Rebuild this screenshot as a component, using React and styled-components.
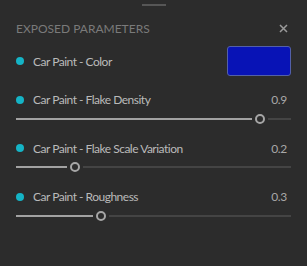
import React from "react";
import styled, { createGlobalStyle } from "styled-components";

const Global = createGlobalStyle`
  html, body { margin: 0; padding: 0; background: #2c2c2c; }
  body { font-family: Lato, "Open Sans", sans-serif; }
`;

const Panel = styled.div`
  width: 307px;
  height: 266px;
  box-sizing: border-box;
  background: #2c2c2c;
  padding: 0 16px;
  display: flex;
  flex-direction: column;
`;

const Grip = styled.div`
  align-self: center;
  width: 24px;
  height: 2px;
  margin-top: 4px;
  background: #565656;
`;

const Header = styled.div`
  margin-top: 11px;
  height: 23px;
  display: flex;
  align-items: center;
  justify-content: space-between;
`;

const Title = styled.div`
  font-size: 12px;
  letter-spacing: 0;
  color: #7a7a7a;
  text-transform: uppercase;
`;

const Close = styled.button`
  width: 16px;
  height: 16px;
  padding: 0;
  border: 0;
  background: transparent;
  display: flex;
  align-items: center;
  justify-content: center;
  color: #9a9a9a;
`;

const List = styled.div`
  margin-top: 6px;
  display: flex;
  flex-direction: column;
  gap: 15.5px;
`;

const ColorRow = styled.div`
  height: 30px;
  display: flex;
  align-items: center;
`;

const Label = styled.div`
  flex: 1;
  display: flex;
  align-items: center;
  gap: 9px;
  height: 16px;
  font-size: 12px;
  letter-spacing: -0.5px;
  color: #bababa;
`;

const Dot = styled.span`
  width: 8px;
  height: 8px;
  border-radius: 50%;
  background: #15b4c6;
  flex: none;
`;

const Swatch = styled.div`
  width: 62px;
  height: 28px;
  border: 1px solid #5360a8;
  border-radius: 3px;
  background: ${(p) => p.color};
`;

const SliderRow = styled.div`
  display: flex;
  flex-direction: column;
  gap: 5px;
`;

const LabelLine = styled.div`
  display: flex;
  align-items: center;
  justify-content: space-between;
  height: 16px;
`;

const Value = styled.span`
  font-size: 12px;
  letter-spacing: -0.3px;
  color: #a8a8a8;
  margin-right: 4px;
`;

const Track = styled.div`
  height: 12px;
  display: flex;
  align-items: center;
`;

const Fill = styled.div`
  height: 2px;
  background: #a2a2a2;
  flex: none;
`;

const Rest = styled.div`
  height: 2px;
  flex: 1;
  background: #444444;
`;

const Thumb = styled.div`
  width: 10px;
  height: 10px;
  box-sizing: border-box;
  border-radius: 50%;
  border: 2px solid #a6a6a6;
  background: #2c2c2c;
  margin: 0 3px;
  flex: none;
`;

function Slider({ value }) {
  const center = 5.5 + value * 265;
  return (
    <Track>
      <Fill style={{ width: `${Math.max(0, center - 8)}px` }} />
      <Thumb />
      <Rest />
    </Track>
  );
}

const params = [
  { name: "Car Paint - Flake Density", value: 0.9 },
  { name: "Car Paint - Flake Scale Variation", value: 0.2 },
  { name: "Car Paint - Roughness", value: 0.3 },
];

export default function App() {
  return (
    <>
      <Global />
      <Panel>
        <Grip />
        <Header>
          <Title>Exposed Parameters</Title>
          <Close aria-label="close">
            <svg width="9" height="9" viewBox="0 0 9 9">
              <path d="M1 1 L8 8 M8 1 L1 8" stroke="currentColor" strokeWidth="1.5" />
            </svg>
          </Close>
        </Header>
        <List>
          <ColorRow>
            <Label>
              <Dot />
              Car Paint - Color
            </Label>
            <Swatch color="#0813b6" />
          </ColorRow>
          {params.map((p) => (
            <SliderRow key={p.name}>
              <LabelLine>
                <Label>
                  <Dot />
                  {p.name}
                </Label>
                <Value>{p.value}</Value>
              </LabelLine>
              <Slider value={p.value} />
            </SliderRow>
          ))}
        </List>
      </Panel>
    </>
  );
}
